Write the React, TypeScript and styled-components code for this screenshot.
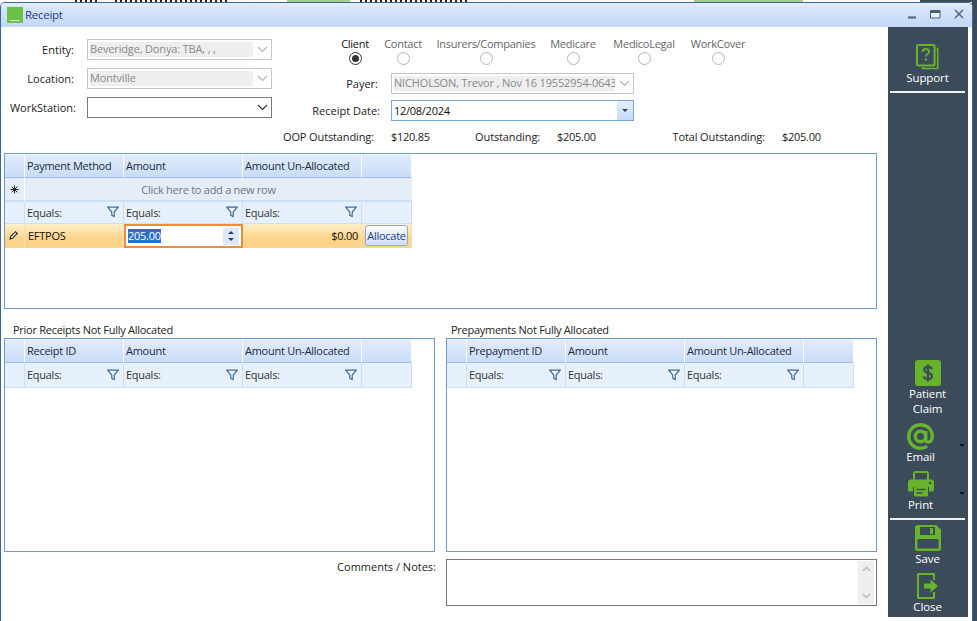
import styled, { createGlobalStyle } from 'styled-components'

const GREEN = '#67b32c'
const UI_FONT = '"Open Sans", "Noto Sans", "Liberation Sans", sans-serif'

const GlobalStyle = createGlobalStyle`
  html, body { margin: 0; padding: 0; background: #fff; }
  body { font-family: ${UI_FONT}; font-size: 11px; letter-spacing: -0.27px; color: #1c1c1c; }
  * { box-sizing: border-box; }
`

const Desktop = styled.div`
  position: relative;
  width: 977px;
  height: 621px;
  overflow: hidden;
  background: linear-gradient(90deg, #fff 972px, #3c4b5a 972px);
`

// the app behind the dialog only peeks out as clipped text and two green tabs
const BackdropStrip = styled.div`
  height: 2px;
  background:
    linear-gradient(
      90deg,
      #fff 72px, transparent 72px, transparent 97px, #fff 97px,
      #fff 113px, transparent 113px, transparent 227px, #fff 227px,
      #fff 287px, #a6cf8f 287px, #a6cf8f 350px, #fff 350px,
      #fff 358px, transparent 358px, transparent 468px, #fff 468px,
      #fff 694px, #a6cf8f 694px, #a6cf8f 803px, #fff 803px,
      #fff 920px, #3c4b5a 920px
    ),
    repeating-linear-gradient(90deg, #222 0, #222 2px, #fff 2px, #fff 5px);
`

const Window = styled.div`
  width: 973px;
  height: 619px;
  display: flex;
  flex-direction: column;
  background: #fff;
  border: 1px solid #3e6591;
  border-bottom: none;
  border-radius: 5px 5px 0 0;
  overflow: hidden;
`

const TitleBar = styled.div`
  height: 24px;
  flex: none;
  display: flex;
  align-items: center;
  padding: 0 2px 0 6px;
  background: linear-gradient(180deg, #e6effd 0, #d6e5fa 20%, #c1d8f7 100%);
`

const AppLogo = styled.div`
  width: 16px;
  height: 16px;
  background: #6cc04a;
  display: flex;
  align-items: flex-end;
  justify-content: center;
  margin-right: 2px;
  &::after {
    content: '';
    width: 10px;
    height: 1px;
    margin-bottom: 2px;
    background: #d5efc8;
  }
`

const TitleText = styled.span`
  font-size: 11.5px;
  color: #283a8c;
  flex: 1;
  margin-bottom: 2px;
`

const WindowButton = styled.button`
  width: 23px;
  height: 18px;
  padding: 0;
  margin-bottom: 2px;
  border: none;
  background: none;
  display: flex;
  align-items: center;
  justify-content: center;
`

const Body = styled.div`
  flex: 1;
  min-height: 0;
  display: flex;
`

const Main = styled.div`
  width: 887px;
  flex: none;
  display: flex;
  flex-direction: column;
`

const TopForm = styled.div`
  height: 126px;
  flex: none;
  display: flex;
`

const LeftForm = styled.div`
  width: 271px;
  flex: none;
  padding-top: 12px;
  display: grid;
  grid-template-columns: 73px 185px;
  column-gap: 13px;
  grid-auto-rows: 21px;
  row-gap: 8px;
  align-content: start;
`

const FieldLabel = styled.label<{ $overhang?: number }>`
  align-self: center;
  text-align: right;
  white-space: nowrap;
  letter-spacing: 0;
  color: #222;
  margin-right: ${p => -(p.$overhang ?? 0)}px;
`

const RightForm = styled.div`
  flex: 1;
  display: flex;
  flex-direction: column;
`

const RadioGroup = styled.div`
  margin: 10px 0 0 59px;
  display: grid;
  grid-template-columns: 48px 48px 118px 56px 86px 62px;
`

const RadioOption = styled.div`
  display: flex;
  flex-direction: column;
  align-items: center;
  gap: 1px;
`

const RadioText = styled.span<{ $active?: boolean }>`
  line-height: 14px;
  white-space: nowrap;
  color: ${p => (p.$active ? '#111' : '#666')};
`

const RadioDot = styled.span<{ $active?: boolean }>`
  width: 13px;
  height: 13px;
  border-radius: 50%;
  border: 1px solid ${p => (p.$active ? '#333' : '#b4b4b4')};
  display: flex;
  align-items: center;
  justify-content: center;
  background: #fff;
  &::after {
    content: '';
    width: 7px;
    height: 7px;
    border-radius: 50%;
    background: ${p => (p.$active ? '#333' : 'transparent')};
  }
`

const PayerGrid = styled.div`
  margin-top: 8px;
  display: grid;
  grid-template-columns: 108px 243px;
  column-gap: 11px;
  grid-auto-rows: 21px;
  row-gap: 6px;
`

const PayerLabel = styled(FieldLabel)<{ $inset?: number }>`
  padding-right: ${p => p.$inset ?? 0}px;
`

const SelectBox = styled.div<{ $disabled?: boolean }>`
  display: flex;
  align-items: center;
  height: 100%;
  padding: 2px 0 2px 2px;
  background: #fff;
  border: 1px solid ${p => (p.$disabled ? '#c6c6c6' : '#7a7a7a')};
  overflow: hidden;
`

const SelectValue = styled.div`
  flex: 1;
  min-width: 0;
  height: 100%;
  line-height: 14px;
  letter-spacing: -0.16px;
  white-space: nowrap;
  overflow: hidden;
  color: #8a8a8a;
  background: #eee;
`

const SelectBlank = styled.div`
  flex: 1;
`

const SelectArrow = styled.div`
  width: 18px;
  flex: none;
  display: flex;
  justify-content: center;
`

const DateBox = styled.div`
  display: flex;
  align-items: center;
  height: 100%;
  border: 1px solid #7ea6d6;
  background: #fff;
  padding-left: 2px;
`

const DateValue = styled.span`
  flex: 1;
  color: #111;
`

const DateButton = styled.div`
  width: 16px;
  height: 100%;
  display: flex;
  align-items: center;
  justify-content: center;
  background: linear-gradient(180deg, #e3eefc, #c4daf7);
  &::after {
    content: '';
    border: 3px solid transparent;
    border-top: 3px solid #243f6b;
    margin-top: 3px;
  }
`

const SummaryRow = styled.div`
  margin-top: 8px;
  display: grid;
  grid-template-columns: 102px 84px 82px 71px 154px auto;
  line-height: 16px;
`

const SummaryLabel = styled.span`
  text-align: right;
  white-space: nowrap;
  letter-spacing: -0.12px;
`

const SummaryValue = styled.span`
  padding-left: 17px;
`

const Panel = styled.div<{ $height: number }>`
  height: ${p => p.$height}px;
  border: 1px solid #6f9ad0;
  background: #fff;
  overflow: hidden;
`

const TopPanel = styled(Panel)`
  margin-left: 3px;
  width: 873px;
  flex: none;
`

const GridSection = styled.div`
  margin: 13px 0 0 3px;
  width: 873px;
  display: grid;
  grid-template-columns: 431px 431px;
  column-gap: 11px;
`

const SectionTitle = styled.div<{ $inset: number }>`
  padding-left: ${p => p.$inset}px;
  line-height: 15px;
  height: 16px;
  color: #222;
  white-space: nowrap;
`

const GridRow = styled.div<{ $height: number }>`
  width: 407px;
  height: ${p => p.$height}px;
  display: grid;
  grid-template-columns: 20px 99px 119px 119px 50px;
`

const GridHeaderCell = styled.div`
  display: flex;
  align-items: center;
  padding-left: 2px;
  white-space: nowrap;
  color: #1c2a3e;
  background: linear-gradient(180deg, #e2edfc, #c8dcf8);
  border-right: 1px solid #fff;
  border-bottom: 1px solid #9fbde4;
  box-shadow: inset 0 1px 0 #f1f6fe;
`

const FilterCell = styled.div`
  display: flex;
  align-items: center;
  justify-content: space-between;
  padding: 0 4px 1px 2px;
  color: #333;
  background: #e7f1fd;
  border-right: 1px solid #cddff6;
  border-bottom: 1px solid #cddff6;
`

const NewRowCell = styled.div`
  grid-column: 2 / -1;
  display: flex;
  align-items: center;
  justify-content: center;
  padding-right: 20px;
  color: #6d7683;
  background: #e5edf8;
  border-bottom: 2px solid #cddff6;
`

const MarkerCell = styled.div`
  display: flex;
  align-items: center;
  justify-content: center;
  background: #e5edf8;
  border-right: 1px solid #fff;
  border-bottom: 2px solid #cddff6;
`

const SelectedCell = styled.div<{ $right?: boolean }>`
  display: flex;
  align-items: center;
  justify-content: ${p => (p.$right ? 'flex-end' : 'flex-start')};
  padding: 0 3px 1px;
  color: #111;
  background: linear-gradient(180deg, #fff0cc, #fdd68f 55%, #ffd184);
  border-right: 1px solid #f5e3b8;
  border-bottom: 1px solid #e9d9a8;
`

const AmountEditor = styled.div`
  display: flex;
  align-items: center;
  padding: 0 2px;
  background: #fff;
  border: 2px solid #f08b3c;
`

const SelectedText = styled.span`
  flex: 1;
  display: flex;
`

const Selection = styled.span`
  background: #2c71c9;
  color: #fff;
  line-height: 14px;
`

const Spinner = styled.div`
  width: 16px;
  height: 17px;
  display: flex;
  flex-direction: column;
  align-items: center;
  justify-content: space-evenly;
  background: #dce8f8;
  &::before, &::after {
    content: '';
    border: 3px solid transparent;
  }
  &::before { border-bottom: 3px solid #2b3e5c; border-top: none; }
  &::after { border-top: 3px solid #2b3e5c; border-bottom: none; }
`

const AllocateButton = styled.button`
  width: 46px;
  height: 21px;
  padding: 0;
  font: inherit;
  letter-spacing: inherit;
  color: #24428c;
  white-space: nowrap;
  border: 1px solid #8fabd4;
  border-radius: 3px;
  background: linear-gradient(180deg, #fafcff, #cfe0f7);
`

const CommentsRow = styled.div`
  margin: 7px 0 0 3px;
  width: 873px;
  display: grid;
  grid-template-columns: 432px 431px;
  column-gap: 10px;
`

const CommentsLabel = styled.label`
  text-align: right;
  line-height: 16px;
  letter-spacing: 0;
`

const CommentsBox = styled.div`
  height: 47px;
  border: 1px solid #777;
  display: flex;
  justify-content: flex-end;
  padding: 1px;
`

const ScrollTrack = styled.div`
  width: 16px;
  margin-right: 1px;
  display: flex;
  flex-direction: column;
  justify-content: space-between;
  align-items: center;
  padding: 5px 0;
  background: #efefef;
`

const Sidebar = styled.div`
  width: 80px;
  height: 590px;
  flex: none;
  display: flex;
  flex-direction: column;
  padding: 17px 0 3px;
  background: #3c4b5a;
`

const SideButton = styled.div<{ $menu?: boolean }>`
  position: relative;
  display: flex;
  flex-direction: column;
  align-items: center;
  padding-right: ${p => (p.$menu ? 15 : 1)}px;
`

const SideIcon = styled.div`
  height: 26px;
  display: flex;
  align-items: center;
  justify-content: center;
`

const SideLabel = styled.span`
  width: 60px;
  text-align: center;
  line-height: 15px;
  font-size: 11.5px;
  letter-spacing: -0.1px;
  color: #fff;
`

const MenuCaret = styled.span`
  position: absolute;
  right: 3px;
  top: 21px;
  border: 3px solid transparent;
  border-top: 3px solid #111;
`

const SideDivider = styled.div`
  margin: 6px 3px 5px 2px;
  height: 2px;
  flex: none;
  background: #f1f1f1;
`

const SideGroup = styled.div<{ $pushed?: boolean }>`
  margin-top: ${p => (p.$pushed ? 'auto' : 0)};
  display: flex;
  flex-direction: column;
  gap: 7px;
`

const Chevron = ({ color }: { color: string }) => (
  <svg width="11" height="7" viewBox="0 0 11 7">
    <path d="M1 1l4.500 4.500L10 1" fill="none" stroke={color} strokeWidth="1.200" />
  </svg>
)

const FilterIcon = () => (
  <svg width="12" height="12" viewBox="0 0 12 12">
    <path d="M.8 1.200h10.400L7.200 6v4.600L4.800 9.400V6z" fill="#f2f7fe" stroke="#3f6d9e" strokeWidth="1.200" />
  </svg>
)

const NewRowIcon = () => (
  <svg width="9" height="9" viewBox="0 0 9 9">
    <path d="M4.500 .5v8M.5 4.500h8M1.700 1.700l5.600 5.600M7.300 1.700L1.700 7.300" stroke="#222" strokeWidth="1" />
  </svg>
)

const PencilIcon = () => (
  <svg width="11" height="11" viewBox="0 0 11 11">
    <path d="M2 9l.7-2.400L7.600 1.700l1.700 1.700-4.900 4.900z" fill="#fff" stroke="#222" strokeWidth="1.100" />
  </svg>
)

const MinimizeIcon = () => (
  <svg width="9" height="9" viewBox="0 0 9 9">
    <path d="M0 7.500h8" stroke="#4d5b6c" strokeWidth="2" />
  </svg>
)

const MaximizeIcon = () => (
  <svg width="11" height="9" viewBox="0 0 11 9">
    <path d="M.5.5h9.500v7.500H.5z" fill="#e8f0fc" stroke="#4d5b6c" />
    <path d="M.5 2h9.500" stroke="#4d5b6c" strokeWidth="2" />
  </svg>
)

const CloseIcon = () => (
  <svg width="10" height="10" viewBox="0 0 10 10">
    <path d="M1 1l8 8M9 1l-8 8" stroke="#5a6878" strokeWidth="1.600" />
  </svg>
)

const SupportIcon = () => (
  <svg width="23" height="26" viewBox="0 0 23 26">
    <path d="M20.500 4.500h1.200v20H6.500v-1.600" fill="none" stroke={GREEN} strokeWidth="1.600" />
    <rect x="1" y="1" width="17.600" height="20.500" rx="1.500" fill="none" stroke={GREEN} strokeWidth="2" />
    <path d="M6.600 8c0-2 1.400-3 3.200-3s3.200 1 3.200 2.800c0 2.400-3.200 2.300-3.200 4.700" fill="none" stroke={GREEN} strokeWidth="1.900" />
    <rect x="8.800" y="14.400" width="2.100" height="2.300" fill={GREEN} />
  </svg>
)

const ClaimIcon = () => (
  <svg width="26" height="26" viewBox="0 0 26 26">
    <rect width="26" height="26" rx="3" fill={GREEN} />
    <path
      d="M17 9.200c-.5-1.600-2-2.300-4-2.300-2.300 0-3.800 1.100-3.800 2.800 0 4 7.800 2.400 7.800 6.500 0 1.800-1.600 2.900-4 2.900-2.200 0-3.700-.9-4.200-2.600M13 4.500v17"
      fill="none"
      stroke="#3c4b5a"
      strokeWidth="2.200"
    />
  </svg>
)

const EmailIcon = () => (
  <svg width="27" height="27" viewBox="0 0 27 27">
    <circle cx="13.500" cy="13.500" r="5.200" fill="none" stroke={GREEN} strokeWidth="3.400" />
    <path
      d="M18.700 8v8c0 2 1 3 2.400 3 2.200 0 4.200-2.200 4.200-5.700C25.300 6.300 20 1.700 13.500 1.700 6.800 1.700 1.700 6.800 1.700 13.500s5 11.800 11.800 11.800c2.700 0 4.700-.6 6.800-1.900"
      fill="none"
      stroke={GREEN}
      strokeWidth="3.400"
    />
  </svg>
)

const PrintIcon = () => (
  <svg width="26" height="26" viewBox="0 0 26 26">
    <path d="M6 9V2.500C6 1.600 6.600 1 7.500 1h11c.9 0 1.500.6 1.500 1.500V9" fill="none" stroke={GREEN} strokeWidth="2" />
    <path
      d="M3 8.500h20c1.700 0 3 1.300 3 3V19c0 .8-.7 1.500-1.500 1.500H21V16H5v4.500H1.500C.7 20.500 0 19.800 0 19v-7.500c0-1.700 1.300-3 3-3z"
      fill={GREEN}
    />
    <rect x="6" y="15" width="14" height="10.500" rx="1" fill={GREEN} />
    <path d="M8.500 18.500h9M8.500 22h6" stroke="#3c4b5a" strokeWidth="1.600" />
    <circle cx="22" cy="12" r="1.200" fill="#3c4b5a" />
  </svg>
)

const SaveIcon = () => (
  <svg width="26" height="26" viewBox="0 0 26 26">
    <path
      d="M2.500 0h18.700L26 4.500v19c0 1.400-1.100 2.500-2.500 2.500h-21C1.100 26 0 24.900 0 23.500v-21C0 1.100 1.100 0 2.500 0z"
      fill={GREEN}
    />
    <rect x="5" y="2" width="15" height="8" fill="#3c4b5a" />
    <rect x="15" y="3" width="3" height="6" fill={GREEN} />
    <rect x="2.500" y="14" width="21" height="9.500" fill="#3c4b5a" />
  </svg>
)

const ExitIcon = () => (
  <svg width="22" height="26" viewBox="0 0 22 26">
    <path d="M17 7V1H1v24h16v-6" fill="none" stroke={GREEN} strokeWidth="2" strokeLinejoin="round" />
    <path d="M7 10.500h6.500V6.500l7.500 6.500-7.500 6.500v-4H7z" fill={GREEN} />
  </svg>
)

type RowHeaders = [string, string, string]

function FilterRow({ height }: { height: number }) {
  return (
    <GridRow $height={height}>
      <FilterCell />
      {[0, 1, 2].map(i => (
        <FilterCell key={i}>
          Equals:
          <FilterIcon />
        </FilterCell>
      ))}
      <FilterCell />
    </GridRow>
  )
}

function HeaderRow({ titles }: { titles: RowHeaders }) {
  return (
    <GridRow $height={24}>
      <GridHeaderCell />
      {titles.map(title => (
        <GridHeaderCell key={title}>{title}</GridHeaderCell>
      ))}
      <GridHeaderCell />
    </GridRow>
  )
}

function EmptyGrid({ title, inset, titles }: { title: string; inset: number; titles: RowHeaders }) {
  return (
    <div>
      <SectionTitle $inset={inset}>{title}</SectionTitle>
      <Panel $height={214}>
        <HeaderRow titles={titles} />
        <FilterRow height={25} />
      </Panel>
    </div>
  )
}

const PARTIES = ['Client', 'Contact', 'Insurers/Companies', 'Medicare', 'MedicoLegal', 'WorkCover']

export default function App() {
  return (
    <Desktop>
      <GlobalStyle />
      <BackdropStrip />
      <Window>
        <TitleBar>
          <AppLogo />
          <TitleText>Receipt</TitleText>
          <WindowButton><MinimizeIcon /></WindowButton>
          <WindowButton><MaximizeIcon /></WindowButton>
          <WindowButton><CloseIcon /></WindowButton>
        </TitleBar>
        <Body>
          <Main>
            <TopForm>
              <LeftForm>
                <FieldLabel>Entity:</FieldLabel>
                <SelectBox $disabled>
                  <SelectValue>Beveridge, Donya: TBA, , ,</SelectValue>
                  <SelectArrow><Chevron color="#b5b5b5" /></SelectArrow>
                </SelectBox>
                <FieldLabel>Location:</FieldLabel>
                <SelectBox $disabled>
                  <SelectValue>Montville</SelectValue>
                  <SelectArrow><Chevron color="#b5b5b5" /></SelectArrow>
                </SelectBox>
                <FieldLabel $overhang={2}>WorkStation:</FieldLabel>
                <SelectBox>
                  <SelectBlank />
                  <SelectArrow><Chevron color="#333" /></SelectArrow>
                </SelectBox>
              </LeftForm>
              <RightForm>
                <RadioGroup>
                  {PARTIES.map((party, i) => (
                    <RadioOption key={party}>
                      <RadioText $active={i === 0}>{party}</RadioText>
                      <RadioDot $active={i === 0} />
                    </RadioOption>
                  ))}
                </RadioGroup>
                <PayerGrid>
                  <PayerLabel $inset={2}>Payer:</PayerLabel>
                  <SelectBox $disabled>
                    <SelectValue>NICHOLSON, Trevor , Nov 16 19552954-0643</SelectValue>
                    <SelectArrow><Chevron color="#b5b5b5" /></SelectArrow>
                  </SelectBox>
                  <PayerLabel>Receipt Date:</PayerLabel>
                  <DateBox>
                    <DateValue>12/08/2024</DateValue>
                    <DateButton />
                  </DateBox>
                </PayerGrid>
                <SummaryRow>
                  <SummaryLabel>OOP Outstanding:</SummaryLabel>
                  <SummaryValue>$120.85</SummaryValue>
                  <SummaryLabel>Outstanding:</SummaryLabel>
                  <SummaryValue>$205.00</SummaryValue>
                  <SummaryLabel>Total Outstanding:</SummaryLabel>
                  <SummaryValue>$205.00</SummaryValue>
                </SummaryRow>
              </RightForm>
            </TopForm>

            <TopPanel $height={156}>
              <HeaderRow titles={['Payment Method', 'Amount', 'Amount Un-Allocated']} />
              <GridRow $height={24}>
                <MarkerCell><NewRowIcon /></MarkerCell>
                <NewRowCell>Click here to add a new row</NewRowCell>
              </GridRow>
              <FilterRow height={22} />
              <GridRow $height={24}>
                <SelectedCell><PencilIcon /></SelectedCell>
                <SelectedCell>EFTPOS</SelectedCell>
                <AmountEditor>
                  <SelectedText><Selection>205.00</Selection></SelectedText>
                  <Spinner />
                </AmountEditor>
                <SelectedCell $right>$0.00</SelectedCell>
                <SelectedCell><AllocateButton>Allocate</AllocateButton></SelectedCell>
              </GridRow>
            </TopPanel>

            <GridSection>
              <EmptyGrid
                title="Prior Receipts Not Fully Allocated"
                inset={9}
                titles={['Receipt ID', 'Amount', 'Amount Un-Allocated']}
              />
              <EmptyGrid
                title="Prepayments Not Fully Allocated"
                inset={5}
                titles={['Prepayment ID', 'Amount', 'Amount Un-Allocated']}
              />
            </GridSection>

            <CommentsRow>
              <CommentsLabel>Comments / Notes:</CommentsLabel>
              <CommentsBox>
                <ScrollTrack>
                  <svg width="9" height="6" viewBox="0 0 9 6">
                    <path d="M1 5l3.500-3.500L8 5" fill="none" stroke="#bdbdbd" strokeWidth="1.600" />
                  </svg>
                  <svg width="9" height="6" viewBox="0 0 9 6">
                    <path d="M1 1l3.500 3.500L8 1" fill="none" stroke="#bdbdbd" strokeWidth="1.600" />
                  </svg>
                </ScrollTrack>
              </CommentsBox>
            </CommentsRow>
          </Main>

          <Sidebar>
            <SideButton>
              <SideIcon><SupportIcon /></SideIcon>
              <SideLabel>Support</SideLabel>
            </SideButton>
            <SideDivider />
            <SideGroup $pushed>
              <SideButton>
                <SideIcon><ClaimIcon /></SideIcon>
                <SideLabel>Patient Claim</SideLabel>
              </SideButton>
              <SideButton $menu>
                <SideIcon><EmailIcon /></SideIcon>
                <SideLabel>Email</SideLabel>
                <MenuCaret />
              </SideButton>
              <SideButton $menu>
                <SideIcon><PrintIcon /></SideIcon>
                <SideLabel>Print</SideLabel>
                <MenuCaret />
              </SideButton>
            </SideGroup>
            <SideDivider />
            <SideGroup>
              <SideButton>
                <SideIcon><SaveIcon /></SideIcon>
                <SideLabel>Save</SideLabel>
              </SideButton>
              <SideButton>
                <SideIcon><ExitIcon /></SideIcon>
                <SideLabel>Close</SideLabel>
              </SideButton>
            </SideGroup>
          </Sidebar>
        </Body>
      </Window>
    </Desktop>
  )
}
